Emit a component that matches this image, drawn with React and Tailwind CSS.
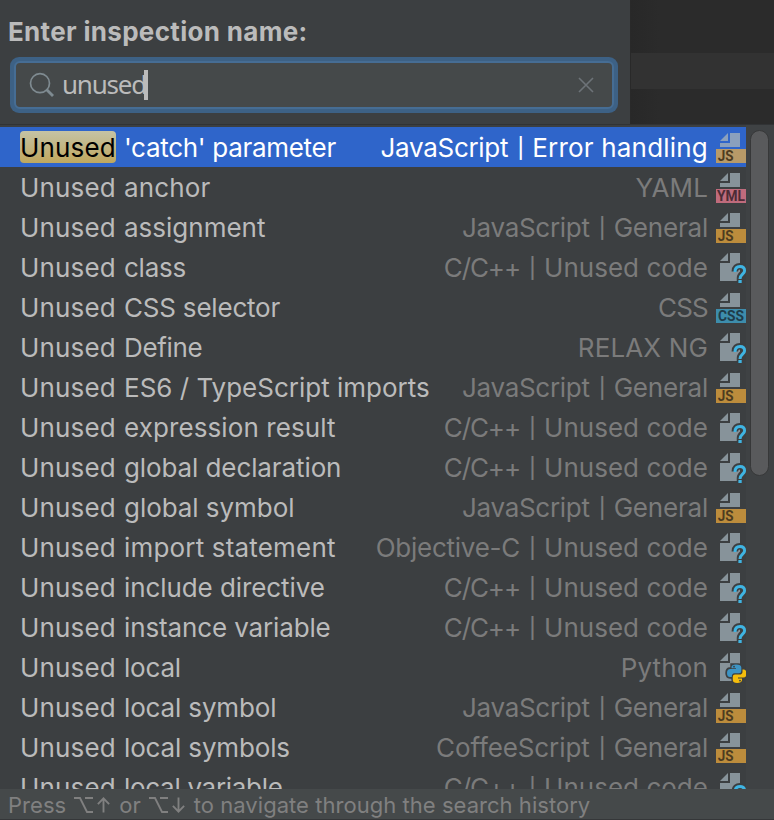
import React from 'react';

const rows = [
  ["'catch' parameter", ['JavaScript', 'Error handling'], 'js', 'tracking-[-0.3px]'],
  ['anchor', ['YAML'], 'yml', 'tracking-[0.15px]'],
  ['assignment', ['JavaScript', 'General'], 'js', 'tracking-[0px]'],
  ['class', ['C/C++', 'Unused code'], 'unknown', 'tracking-[-0.25px]'],
  ['CSS selector', ['CSS'], 'css', 'tracking-[-0.2px]'],
  ['Define', ['RELAX NG'], 'unknown', 'tracking-[-0.35px]'],
  ['ES6 / TypeScript imports', ['JavaScript', 'General'], 'js', 'tracking-[0px]'],
  ['expression result', ['C/C++', 'Unused code'], 'unknown', 'tracking-[0.1px]'],
  ['global declaration', ['C/C++', 'Unused code'], 'unknown', 'tracking-[-0.1px]'],
  ['global symbol', ['JavaScript', 'General'], 'js', 'tracking-[-0.05px]'],
  ['import statement', ['Objective-C', 'Unused code'], 'unknown', 'tracking-[0.18px]'],
  ['include directive', ['C/C++', 'Unused code'], 'unknown', 'tracking-[-0.08px]'],
  ['instance variable', ['C/C++', 'Unused code'], 'unknown', 'tracking-[-0.13px]'],
  ['local', ['Python'], 'python', 'tracking-[-0.2px]'],
  ['local symbol', ['JavaScript', 'General'], 'js', 'tracking-[-0.15px]'],
  ['local symbols', ['CoffeeScript', 'General'], 'js', 'tracking-[-0.15px]'],
  ['local variable', ['C/C++', 'Unused code'], 'unknown', 'tracking-[-0.3px]'],
];

const groupTracking = {
  JavaScript: 'tracking-[-0.3px]',
  CoffeeScript: 'tracking-[-0.1px]',
  'C/C++': 'tracking-[-1.1px]',
  'Objective-C': 'tracking-[-0.25px]',
  General: 'tracking-[-0.2px]',
  'Unused code': 'tracking-[0.02px]',
  'Error handling': 'tracking-[0.2px]',
  CSS: 'tracking-[-0.8px]',
};

const labels = {
  js: { text: 'JS', fill: '#bc8c3c', ink: '#4d3c20', x: 1.7, width: 15.8 },
  yml: { text: 'YML', fill: '#bf6b7c', ink: '#4d2c36', x: 1, width: 28 },
  css: { text: 'CSS', fill: '#3d8dac', ink: '#1f3c4a', x: 2, width: 26 },
};

function FileIcon({ type, selected }) {
  const label = labels[type];
  const page = selected ? '#8aa0bd' : '#87939a';
  return (
    <svg className="block h-[30px] w-[30px] shrink-0 overflow-visible" viewBox="0 0 30 30">
      <path d="M4 8L12 0V8Z" fill={page} />
      <path d={label ? 'M14 0H24V14H4V10H14Z' : 'M14 0H24V28H4V10H14Z'} fill={page} />
      {label && (
        <>
          <rect y="16" width="30" height="14" fill={selected ? '#b89a68' : label.fill} />
          <text
            x={label.x}
            y="28"
            textLength={label.width}
            lengthAdjust="spacingAndGlyphs"
            className="font-['Roboto',sans-serif] text-[14px] font-bold"
            fill={label.ink}
          >
            {label.text}
          </text>
        </>
      )}
      {type === 'unknown' && (
        <>
          <path d="M18.8 18.5C18.8 14.8 21 13.3 24 13.3C27 13.3 28.6 15 28.6 17.5C28.6 21 24 20.8 24 25V30" fill="none" stroke="#3c3f41" strokeWidth="6.5" />
          <path d="M19 19C19 15.2 21 13.6 24 13.6C27 13.6 28.6 15.3 28.6 17.8C28.6 21.3 24 21.2 24 26" fill="none" stroke="#3fb4e2" strokeWidth="3" />
          <rect x="22.4" y="27" width="3.3" height="3" fill="#3fb4e2" />
        </>
      )}
      {type === 'python' && (
        <>
          <g fill="#3c3f41" stroke="#3c3f41" strokeWidth="3.4">
            <path d="M16 12H22Q25 12 25 15V20H19Q16 20 16 24H14Q11 24 11 20Q11 16 14 16H16Z" />
            <path d="M25 16H27Q30 16 30 20Q30 25 27 25H24V28Q22 30 20 29Q17 29 17 26V23Q17 21 20 21H25Z" />
          </g>
          <path d="M15.5 14Q15.5 11.5 20 11.5Q25.3 11.5 25.3 14.5V18Q25.3 20.3 23 20.3H18.5Q15.8 20.3 15.8 24H14Q11 24 11 20Q11 16 14.5 16H20V15.3H15.5Z" fill="#3d94c4" />
          <path d="M26.5 16.5H28Q30.5 17 30.5 20.5Q30.5 24.6 27.5 24.6H22V25.5H26V27.3Q25.5 30 21.2 30Q16.8 30 16.8 27V23.7Q16.8 21.5 19 21.5H23.5Q26.5 21.5 26.5 18.7Z" fill="#f5bd0c" />
          <circle cx="18" cy="13.7" r=".9" fill="#3c3f41" />
          <circle cx="24" cy="27.6" r=".9" fill="#3c3f41" />
        </>
      )}
    </svg>
  );
}

function Row({ item, selected }) {
  const [name, groups, type, tracking] = item;
  return (
    <div className={`flex h-10 w-[746px] shrink-0 items-start pl-5 ${selected ? 'bg-[#2f65ca] text-white' : 'text-[#bbbbbb]'}`}>
      <div className="flex flex-1 pt-1 text-[26px] leading-[34px] whitespace-pre">
        <span className={`mr-2 h-8 w-24 tracking-[0.15px] ${selected ? 'rounded bg-gradient-to-b from-[#c5c3a5] to-[#bfa75c] text-black' : ''}`}>Unused</span>
        <span className={tracking}>{name}</span>
      </div>
      <div className={`flex pt-1 pr-2 text-[26px] leading-[34px] whitespace-pre ${selected ? 'text-white' : 'text-[#7b7b7b]'}`}>
        <span className={groupTracking[groups[0]] || 'tracking-[0.15px]'}>{groups[0]}</span>
        {groups[1] && (
          <>
            <span className="w-6 pl-px text-center text-[20px] leading-[34px] font-medium">|</span>
            <span className={groupTracking[groups[1]]}>{groups[1]}</span>
          </>
        )}
      </div>
      <div className="pt-1.5"><FileIcon type={type} selected={selected} /></div>
    </div>
  );
}

function OptionKey() {
  return (
    <svg className="mr-0.5 h-[18px] w-5" viewBox="0 0 20 18" fill="none" stroke="currentColor" strokeWidth="1.8">
      <path d="M0 2H6L13 16H19M11 2H19" />
    </svg>
  );
}

function ArrowKey({ down }) {
  return (
    <svg className={`h-[18px] w-[15px] ${down ? 'rotate-180' : ''}`} viewBox="0 0 16 18" fill="none" stroke="currentColor" strokeWidth="2">
      <path d="M8 17V2M2 8L8 2L14 8" />
    </svg>
  );
}

export default function App() {
  return (
    <div className="flex h-[820px] w-[774px] flex-col overflow-hidden bg-[#3c3f41] font-['Inter',sans-serif] font-[430]">
      <div className="flex h-[124px] shrink-0">
        <div className="w-[630px] pl-2.5">
          <h1 className="-ml-0.5 h-[57px] pt-4 text-[26px] leading-8 font-bold tracking-[0.32px] whitespace-nowrap text-[#bbbbbb]">Enter inspection name:</h1>
          <div className="h-14 w-[608px] rounded-[9px] bg-[#3d6185] p-1">
            <div className="flex h-12 items-center rounded-md border-2 border-[#466d94] bg-[#45494a] pr-[18px] pl-3">
              <svg className="h-7 w-7" viewBox="0 0 28 28" fill="none" stroke="#7f8b91">
                <circle cx="12" cy="12.2" r="9.5" strokeWidth="1.7" />
                <path d="M18.5 18.5L25 25" strokeWidth="2.8" />
              </svg>
              <span className="ml-1.5 pb-0.5 font-['Noto_Sans',sans-serif] text-[26px] leading-8 tracking-[-1.2px] text-[#bbbbbb]">unused</span>
              <span className="-ml-0.5 h-[30px] w-1 bg-[#bbbbbb]" />
              <svg className="ml-auto h-4 w-4" viewBox="0 0 16 16" stroke="#6d7378" strokeWidth="1.6">
                <path d="M1 1L15 15M15 1L1 15" />
              </svg>
            </div>
          </div>
        </div>
        <div className="flex-1 border-l border-[#292929] bg-[#2b2b2b] bg-gradient-to-r from-[#282828] to-[#2b2b2b] to-20% pt-[53px]">
          <div className="h-9 bg-[#323232]" />
        </div>
      </div>
      <div className="flex h-[665px] shrink-0 overflow-hidden border-t border-[#313335]">
        <div className="flex w-[746px] flex-col pt-0.5">
          {rows.map((item, index) => <Row key={item[0]} item={item} selected={index === 0} />)}
        </div>
        <div className="w-7 bg-[#3f4244] pt-[5px] pl-1">
          <div className="h-[346px] w-[19px] rounded-full border border-[#373839] bg-[#595a5c]" />
        </div>
      </div>
      <div className="flex h-[31px] shrink-0 items-center border-b border-[#353739] bg-[#45494a] pt-0.5 pl-2 text-[22px] leading-7 tracking-[0.04px] whitespace-pre text-[#808080]">
        <span className="mr-2">Press</span><OptionKey /><ArrowKey />
        <span className="mx-2">or</span><OptionKey /><ArrowKey down />
        <span className="ml-2">to navigate through the search history</span>
      </div>
    </div>
  );
}
